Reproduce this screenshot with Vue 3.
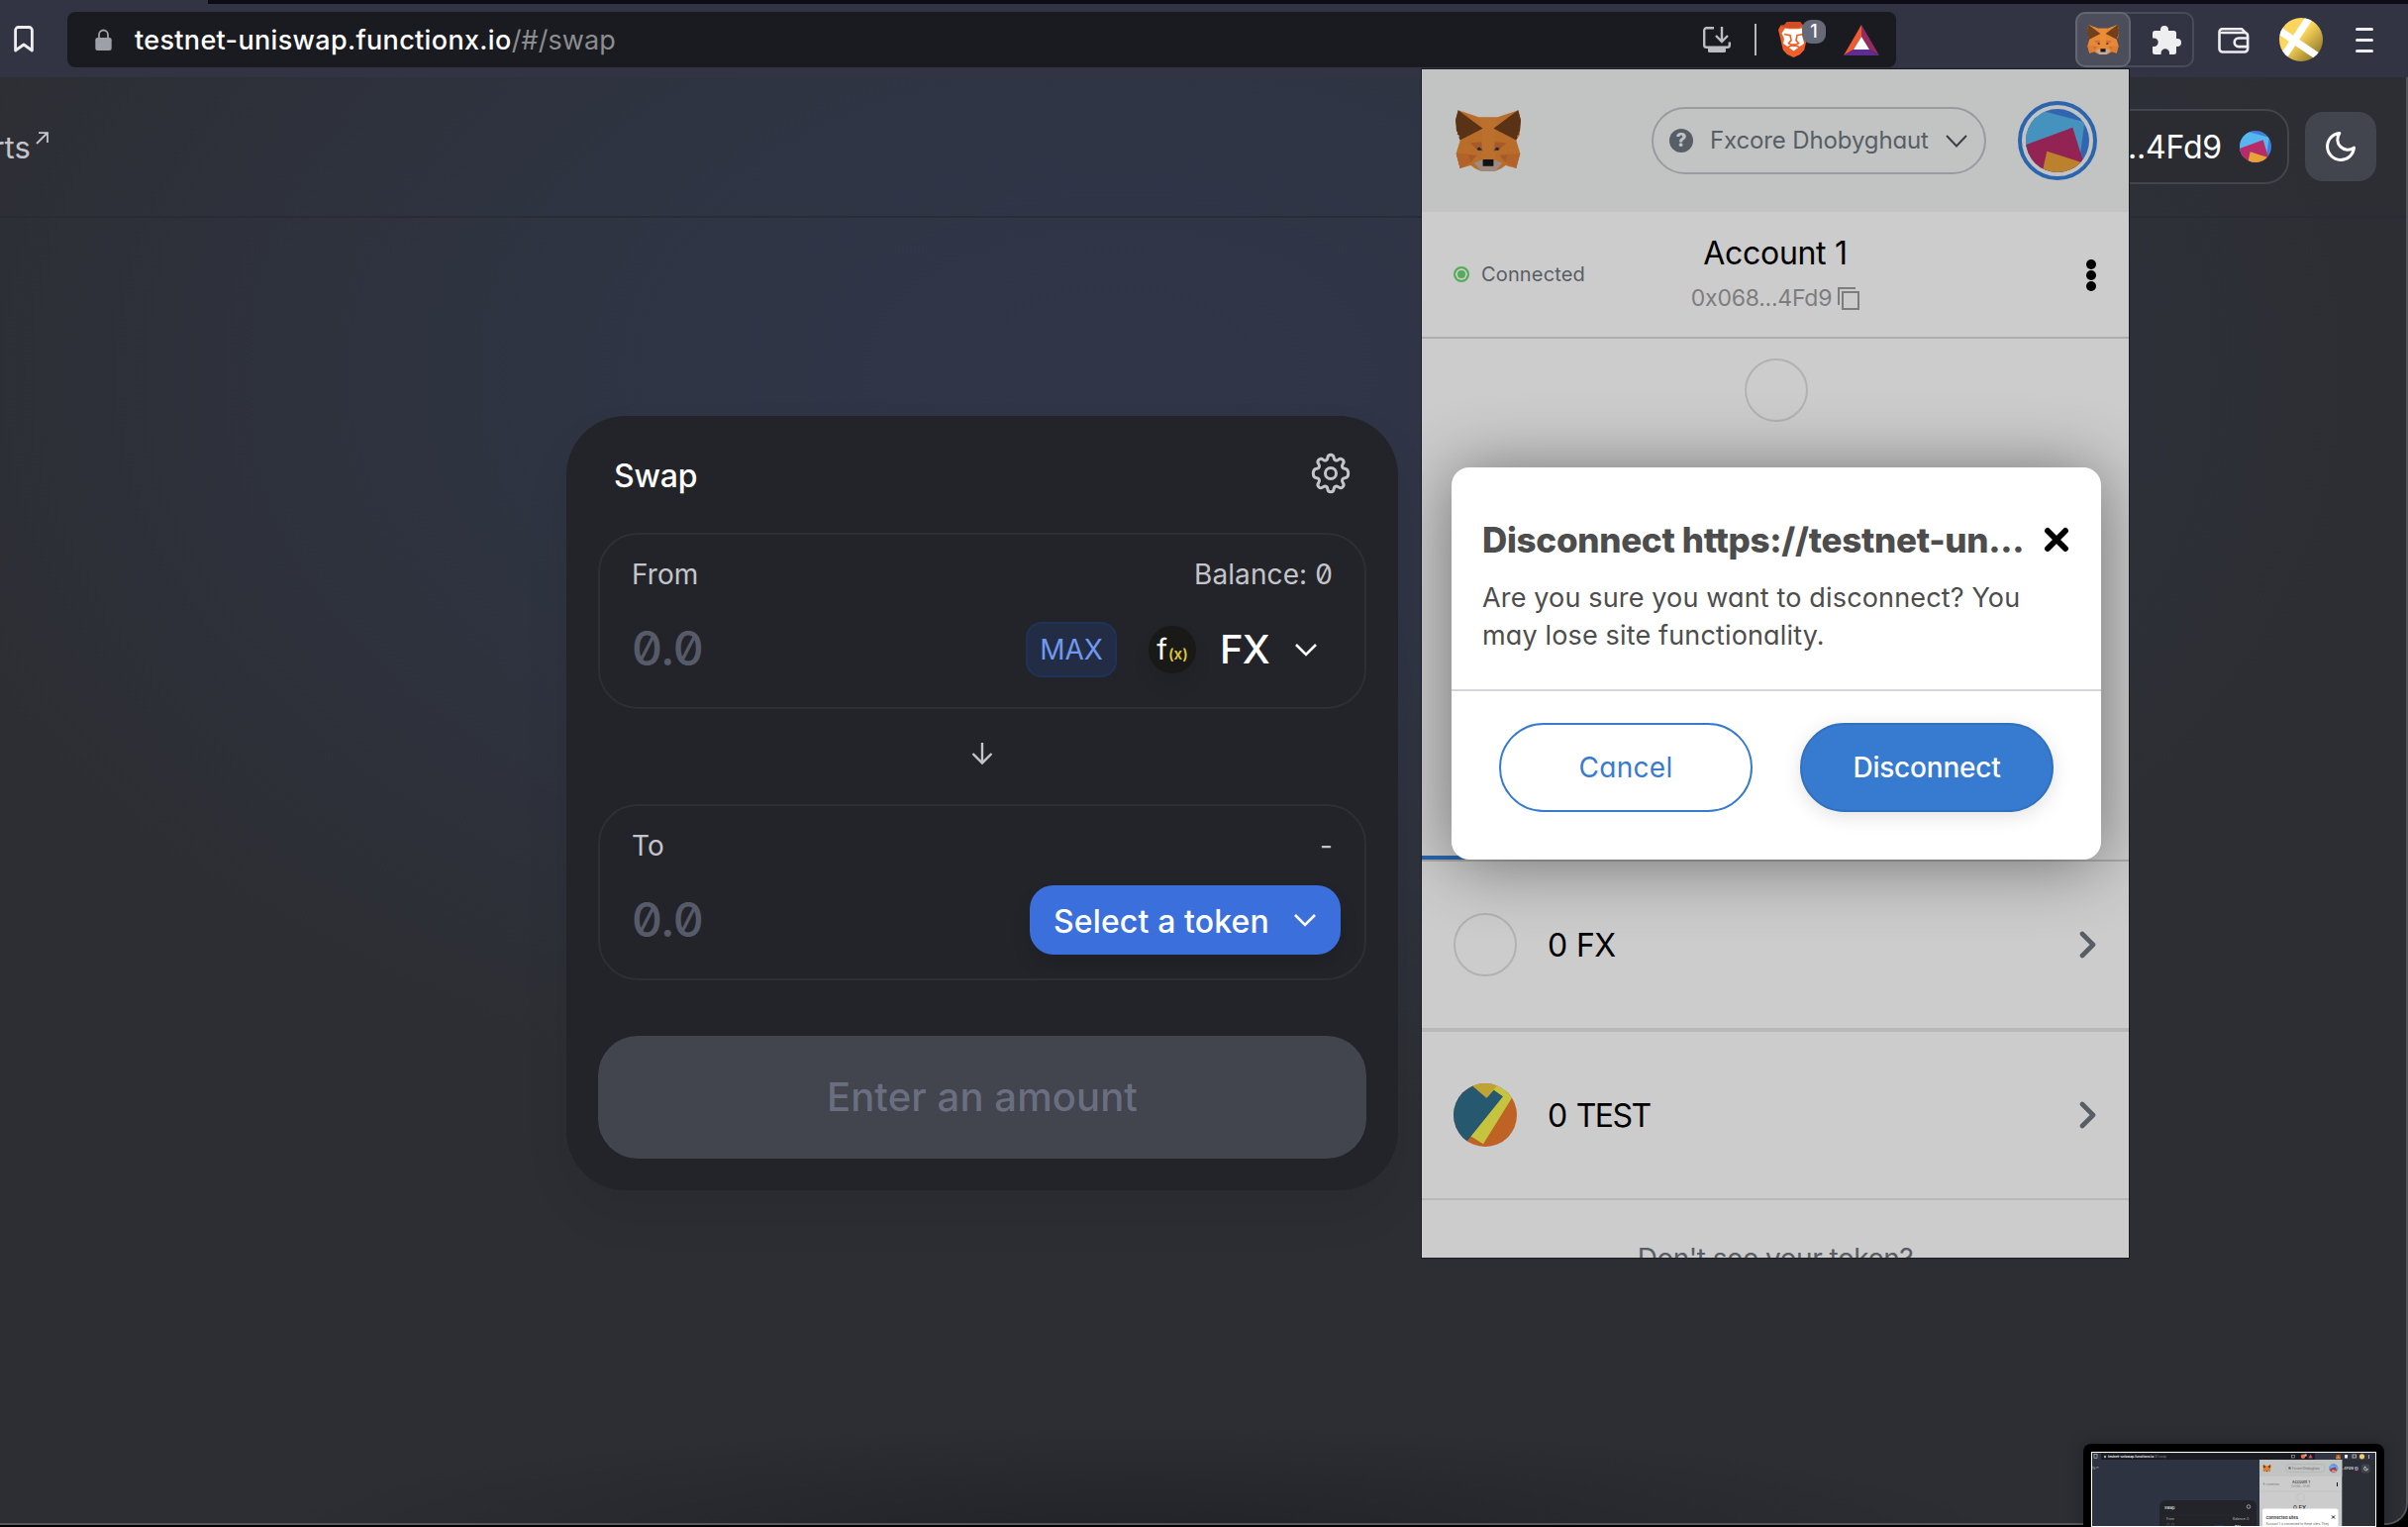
<script setup>
const tokens = [
  { id: 'native', label: '0 FX', blank: true },
  { id: 'test', label: '0 TEST', blank: false },
]
</script>

<template>
  <div class="screen">
    <svg class="defs" width="0" height="0" aria-hidden="true">
      <symbol id="fox" viewBox="0 0 196 183">
        <path fill="#e68835" d="M8 0 72 22h52L188 0l8 30-4 45-10 15 12 40-12 45-32-9-12 9-18 8H76l-18-8-12-9-32 9L2 130l12-40L0 30z" />
        <path fill="#ea8c38" d="M72 22h52l-8 60 4 62H76l4-62z" />
        <path fill="#70401d" d="M8 0 82 55 14 90l-4-8 2-5-7-5 2-5-4-4L0 30zM188 0l-74 55 68 35 4-8-2-5 7-5-2-5 4-4 3-33z" />
        <path fill="#cd6d33" d="M44 98l34-2 4 28-18-6zM152 98l-34-2-4 28 18-6zM38 133l26 2-18 22zM158 133l-26 2 18 22zM2 130l36 3 8 24-32 18z" opacity=".85" />
        <path fill="#e07c33" d="M2 130l36 3 8 24-32 18zM194 130l-36 3-8 24 32 18z" />
        <path fill="#c5ada0" d="M56 158l26-10h32l26 10-20 25H76z" />
        <path fill="#161616" d="M82 148h32v20H82z" />
        <path fill="#233447" d="M64 115l8-4 8 9-12 1zM132 115l-8-4-8 9 12 1z" />
      </symbol>
      <symbol id="jazz" viewBox="0 0 96 96">
        <clipPath id="jc"><circle cx="48" cy="48" r="48" /></clipPath>
        <g clip-path="url(#jc)">
          <path fill="#3f7edb" d="M0 0h96v96H0z" />
          <path fill="#58b6ee" d="M0 0h14l75 20-8 60H0z" />
          <path fill="#b72c68" d="M-2 55 71 28l17 55-20 20H-2z" />
          <path fill="#eaa137" d="M32 64l56 18-10 18H24z" />
        </g>
      </symbol>
      <symbol id="chev" viewBox="0 0 24 14">
        <path d="M2 2l10 10L22 2" fill="none" stroke="currentColor" stroke-width="2.6" />
      </symbol>
    </svg>

    <div class="toolbar">
      <div class="tabstrip"></div>
      <svg class="bookmark" width="20" height="28" viewBox="0 0 20 28"><path d="M1.6 4.5A3 3 0 0 1 4.6 1.5h10.8a3 3 0 0 1 3 3V25L10 19 1.6 25z" fill="none" stroke="#eeeef0" stroke-width="2.8" stroke-linejoin="round" /></svg>
      <div class="urlbar">
        <svg class="lock" width="17" height="22" viewBox="0 0 17 22"><rect x=".3" y="9" width="16.400" height="13" rx="2.200" fill="#9da0a6" /><path d="M4 10V6a4.500 4.500 0 0 1 9 0v4" fill="none" stroke="#9da0a6" stroke-width="1.800" /></svg>
        <span class="url">testnet-uniswap.functionx.io<span class="path">/#/swap</span></span>
        <svg class="install" width="28" height="28" viewBox="0 0 28 28" fill="none" stroke="#bcbdc0" stroke-width="2.400"><path d="M11 1.300H3.500a2.300 2.300 0 0 0-2.300 2.300v14.800a2.300 2.300 0 0 0 2.300 2.300h21a2.300 2.300 0 0 0 2.300-2.300v-3" /><path d="M19 0v14M13 9l6 6 6-6" /><path d="M5 20h18v4.500a1.500 1.500 0 0 1-1.500 1.500h-15A1.500 1.500 0 0 1 5 24.500z" fill="#bcbdc0" stroke="none" /></svg>
        <div class="sep"></div>
        <div class="brave">
          <svg width="31" height="36" viewBox="0 0 31 36"><path fill="#ee5f2a" d="M9 0h13l3 3.500h3.500L31 8l-1 4-3.800 16.500L22 33l-6.500 3L9 33l-4.200-4.500L1 12 0 8l2.500-4.500H6z" /><path fill="#d34c23" d="M9 0h13l3 4-4 2H10L2 5l4-2z" /><path fill="#fff" d="M7 6.500l4 .8h9l4-.8 3.500 5-2.500 5.500 1 5-5 3.500-5.500 4-5.500-4L5 22l1-5-2.500-5.500z" /><path fill="none" stroke="#ee5f2a" stroke-width="1.700" d="M6 12.500l6 1.200 1 5-2.500 3 5 2.500 5-2.500-2.500-3 1-5 6-1.200M9 26l6.500-3 6.500 3" /></svg>
          <span class="count">1</span>
        </div>
        <svg class="bat" width="36" height="31" viewBox="0 0 36 31"><path fill="#ee5a32" d="M18 0v12L10 25 0 31z" /><path fill="#942b60" d="M18 0l18 31-10-6-8-13z" /><path fill="#5f2d91" d="M0 31l10-6h16l10 6z" /><path fill="#fff" d="M18 12l8 13H10z" /></svg>
      </div>
      <div class="exts">
        <div class="ext-fox"><svg width="32" height="30"><use href="#fox" /></svg></div>
        <svg class="puzzle" width="29" height="29" viewBox="0 0 29 29"><path fill="#eeeef0" d="M2.500 5H8V4a4 4 0 0 1 8 0v1h5.500A2.500 2.500 0 0 1 24 7.500V13h1a4 4 0 0 1 0 8h-1v5.500a2.500 2.500 0 0 1-2.500 2.500H17v-1.500a4.200 4.200 0 0 0-8.400 0V29H2.500A2.500 2.500 0 0 1 0 26.500V21h1.500a4.200 4.200 0 0 0 0-8.400H0V7.500A2.500 2.500 0 0 1 2.500 5z" /></svg>
      </div>
      <svg class="wallet" width="32" height="26" viewBox="0 0 32 26" fill="none" stroke="#eeeef0" stroke-width="2.600" stroke-linecap="round" stroke-linejoin="round"><path d="M1.500 4.200v17A3.300 3.300 0 0 0 4.800 24.500h22a3.300 3.300 0 0 0 3.300-3.300V8.300A3.300 3.300 0 0 0 27 5H4M1.500 4.200a3 3 0 0 1 3-3H24l4 4" /><path d="M30 10.500h-9a4.300 4.300 0 0 0 0 8.600h9" /></svg>
      <svg class="profile" width="44" height="44" viewBox="0 0 44 44"><defs><clipPath id="pc"><circle cx="22" cy="22" r="22" /></clipPath><linearGradient id="pg" x1="0" y1="0" x2="1" y2="1"><stop offset=".45" stop-color="#fcd65c" /><stop offset=".9" stop-color="#8c7526" /></linearGradient></defs><g clip-path="url(#pc)"><path fill="url(#pg)" d="M0 0h44v44H0z" /><path stroke="#fff" stroke-width="7.500" d="M31-1 3 41M-1 12l40 27" /></g></svg>
      <div class="menu"><i></i><i></i><i></i></div>
    </div>

    <div class="page">
      <header class="nav">
        <span class="charts">Charts</span>
        <svg class="ext-arrow" width="13" height="13" viewBox="0 0 13 13"><path d="M1 12 11.500 1.500M3 1.200h9V11" fill="none" stroke="#c3c5cb" stroke-width="1.800" /></svg>
        <div class="acct"><span>0x0680...4Fd9</span><svg width="32" height="32"><use href="#jazz" /></svg></div>
        <div class="moon"><svg width="36" height="36" viewBox="0 0 24 24"><path d="M21 12.790A9 9 0 1 1 11.210 3 7 7 0 0 0 21 12.790z" fill="none" stroke="#fff" stroke-width="2" stroke-linejoin="round" stroke-linecap="round" /></svg></div>
      </header>

      <main class="card">
        <div class="card-head">
          <span>Swap</span>
          <svg width="42" height="42" viewBox="0 0 42 42" fill="none" stroke="#c3c5cb" stroke-width="3"><circle cx="21" cy="21" r="5.500" /><path stroke-linejoin="round" d="M21 2.300c1.700 0 3 1.300 3.200 3.200.2 2.200 2.600 3.200 4.300 1.800 1.500-1.200 3.400-1.200 4.600 0s1.200 3.100 0 4.600c-1.400 1.700-.4 4.100 1.800 4.300 2.500.2 3.800 1.900 3.800 4.800 0 2.900-1.300 4.600-3.800 4.800-2.200.2-3.200 2.600-1.800 4.300 1.200 1.500 1.200 3.400 0 4.600s-3.100 1.200-4.600 0c-1.700-1.400-4.100-.4-4.300 1.800-.2 1.900-1.500 3.200-3.200 3.200s-3-1.300-3.200-3.200c-.2-2.200-2.600-3.200-4.300-1.800-1.500 1.200-3.400 1.200-4.600 0s-1.200-3.100 0-4.600c1.400-1.700.4-4.100-1.800-4.300-2.500-.2-3.800-1.900-3.800-4.800 0-2.900 1.300-4.600 3.800-4.800 2.200-.2 3.200-2.600 1.800-4.300-1.200-1.500-1.200-3.400 0-4.600s3.100-1.200 4.600 0c1.700 1.400 4.100.4 4.300-1.800.2-1.900 1.500-3.200 3.200-3.200z" /></svg>
        </div>
        <section class="box">
          <div class="labels"><span>From</span><span>Balance: 0</span></div>
          <div class="entry">
            <span class="zero">0.0</span>
            <span class="max">MAX</span>
            <span class="fx-logo">f<small>(x)</small></span>
            <span class="symbol">FX</span>
            <svg class="cv" width="24" height="14"><use href="#chev" /></svg>
          </div>
        </section>
        <div class="down"><svg width="22" height="24" viewBox="0 0 22 24"><path d="M11 1v20M1.500 12 11 21.500 20.500 12" fill="none" stroke="#c3c5cb" stroke-width="2.400" /></svg></div>
        <section class="box">
          <div class="labels"><span>To</span><span>-</span></div>
          <div class="entry">
            <span class="zero">0.0</span>
            <span class="select">Select a token<svg width="24" height="14"><use href="#chev" /></svg></span>
          </div>
        </section>
        <div class="enter">Enter an amount</div>
      </main>
    </div>

    <aside class="popup">
      <div class="p-head">
        <svg class="dim" width="66" height="62"><use href="#fox" /></svg>
        <div class="network">
          <span class="q">?</span><span class="net-name">Fxcore Dhobyghaut</span>
          <svg width="22" height="13" viewBox="0 0 22 13"><path d="M1 1l10 10.500L21 1" fill="none" stroke="#3c4045" stroke-width="2" /></svg>
        </div>
        <div class="ring"><svg class="dim" width="64" height="64"><use href="#jazz" /></svg></div>
      </div>
      <div class="p-account">
        <div class="conn"><span class="dot"></span>Connected</div>
        <div class="who">
          <div class="name">Account 1</div>
          <div class="addr">0x068...4Fd9<svg width="22" height="23" viewBox="0 0 22 23" fill="none" stroke="#7d7d7d" stroke-width="2"><path d="M1 18V1h17M5 5h16v17H5z" /></svg></div>
        </div>
        <div class="kebab"><i></i><i></i><i></i></div>
      </div>
      <div class="p-main"><div class="blank"></div></div>
      <div v-for="t in tokens" :key="t.id" class="token" :class="t.id">
        <div v-if="t.blank" class="blank"></div>
        <svg v-else width="64" height="64" viewBox="0 0 96 96"><clipPath id="tc"><circle cx="48" cy="48" r="48" /></clipPath><g clip-path="url(#tc)"><path fill="#be6226" d="M0 0h96v96H0z" /><path fill="#c6c43f" d="M60 0h44L91 18 45 92 26 80z" /><path fill="#26586f" d="M0 0h26l24 22 11-12 14 10L20 88-10 110z" /><path fill="#bfa435" d="M24 0h45L50 22z" /></g></svg>
        <span class="t-label">{{ t.label }}</span>
        <svg class="t-arrow" width="18" height="28" viewBox="0 0 18 28"><path d="M3 3l11 11L3 25" fill="none" stroke="#575e65" stroke-width="4.600" stroke-linecap="round" stroke-linejoin="round" /></svg>
      </div>
      <div class="missing">Don't see your token?</div>

      <div class="modal">
        <div class="m-body">
          <div class="m-title"><b>Disconnect https://testnet-un...</b><svg width="26" height="26" viewBox="0 0 26 26"><path d="M4 4l18 18M22 4 4 22" stroke="#000" stroke-width="6" stroke-linecap="round" /></svg></div>
          <p>Are you sure you want to disconnect? You<br />may lose site functionality.</p>
        </div>
        <div class="m-actions"><span class="btn">Cancel</span><span class="btn solid">Disconnect</span></div>
      </div>
    </aside>

    <div class="thumb">
      <svg width="288" height="76" viewBox="0 0 288 76" font-family="Inter, sans-serif">
        <rect width="288" height="76" fill="#2e3342" />
        <rect x="245" width="43" height="76" fill="#2d2f36" />
        <rect width="288" height="8" fill="#313442" />
        <rect x="10" y="1.500" width="216" height="6.500" fill="#1a1b20" />
        <rect x="3" y="2.500" width="3" height="4" fill="none" stroke="#ccc" stroke-width=".6" />
        <circle cx="14" cy="5" r="1.200" fill="#aaa" />
        <text x="17" y="6.300" font-size="3.300" font-weight="600" fill="#fff">testnet-uniswap.functionx.io<tspan fill="#888" font-weight="400">/#/swap</tspan></text>
        <rect x="202.500" y="3.500" width="3" height="2.500" fill="none" stroke="#aaa" stroke-width=".6" />
        <circle cx="214" cy="4.800" r="2.200" fill="#ee7252" /><circle cx="216.500" cy="3.500" r="1.300" fill="#bbb" />
        <path d="M221.500 2.500l2.300 4h-4.600z" fill="#cf4668" />
        <use href="#fox" x="247" y="3" width="5" height="4.500" />
        <path d="M256 3h3v3.500h-3z" fill="#eee" /><rect x="264" y="3" width="3.500" height="3" fill="none" stroke="#ddd" stroke-width=".7" />
        <circle cx="273.500" cy="4.800" r="2.600" fill="#f0cf62" /><path d="M280.500 3v4" stroke="#ccc" stroke-width=".8" />
        <text x="1" y="18" font-size="4" fill="#aaa">ts↗</text>
        <text x="253" y="18" font-size="4" fill="#fff">..4Fd9</text>
        <use href="#jazz" x="266" y="15" width="4" height="4" />
        <rect x="273" y="12.500" width="8.500" height="9" rx="2" fill="#42444e" /><path d="M277 15a2 2 0 1 0 2.500 2.500 2 2 0 0 1-2.500-2.500" fill="none" stroke="#fff" stroke-width=".6" />
        <rect x="69" y="49" width="98" height="40" rx="6" fill="#232429" />
        <text x="74" y="58" font-size="4" fill="#fff">Swap</text>
        <circle cx="159" cy="55.500" r="1.800" fill="none" stroke="#bbb" stroke-width=".8" />
        <rect x="73" y="64" width="90" height="20" rx="4" fill="none" stroke="#303238" stroke-width=".4" />
        <text x="76" y="69.300" font-size="3.300" fill="#bbb">From</text><text x="143" y="69.300" font-size="3.300" fill="#bbb">Balance: 0</text>
        <text x="76" y="77" font-size="5.500" fill="#555968">0.0</text><rect x="124" y="74" width="10" height="4" fill="#24345c" /><text x="145" y="78" font-size="4.500" fill="#fff">FX</text>
        <rect x="170" y="8" width="83.300" height="68" fill="#ccc" /><rect x="170" y="8" width="83.300" height="17" fill="#c2c4c4" />
        <use href="#fox" x="173.500" y="13" width="8" height="7.500" />
        <rect x="196.500" y="12.500" width="39.500" height="8" rx="4" fill="none" stroke="#aaa" stroke-width=".5" /><circle cx="200.500" cy="16.500" r="1.300" fill="#666" />
        <text x="203" y="17.800" font-size="3" fill="#666">Fxcore Dhobyghaut</text>
        <circle cx="244.800" cy="16.700" r="4.300" fill="none" stroke="#5c93cf" stroke-width=".8" /><use href="#jazz" x="241" y="13" width="7.600" height="7.600" />
        <circle cx="174.500" cy="32.500" r=".9" fill="#5ab85a" /><text x="176.500" y="33.500" font-size="2.600" fill="#777">Connected</text>
        <text x="203" y="31.500" font-size="3.900" fill="#111">Account 1</text><text x="202" y="36.300" font-size="3" fill="#888">0x068...4Fd9</text>
        <path d="M248.500 31v4" stroke="#111" stroke-width="1" /><path d="M170 40h83" stroke="#b5b5b5" stroke-width=".4" />
        <circle cx="211.500" cy="46" r="3.800" fill="none" stroke="#b5b5b5" stroke-width=".4" />
        <text x="204" y="59" font-size="6" fill="#111">0 FX</text>
        <rect x="173" y="57.500" width="76.500" height="30" rx="2" fill="#fff" />
        <text x="176.500" y="68" font-size="4.100" font-weight="700" fill="#444">Connected sites</text><path d="M243 64.500l3 3M246 64.500l-3 3" stroke="#000" stroke-width=".9" />
        <text x="176.500" y="74" font-size="3.100" fill="#555">Account 1 is connected to these sites. They</text>
      </svg>
    </div>
  </div>
</template>

<style>
body { background: #000; overflow: hidden; }
</style>

<style scoped>
.screen { position: relative; width: 2432px; height: 1542px; overflow: hidden; background: #000; font-family: Inter, sans-serif; display: flex; flex-direction: column; box-sizing: border-box; }
.screen * { box-sizing: border-box; }
.defs { position: absolute; }
svg { display: block; flex: none; }
span { white-space: nowrap; }

.toolbar { position: relative; height: 78px; flex: none; background: #323443; display: flex; align-items: center; padding-top: 2px; }
.tabstrip { position: absolute; left: 210px; right: 0; top: 0; height: 4px; background: #0c0c16; }
.bookmark { margin-left: 14px; }
.urlbar { margin-left: 34px; width: 1847px; height: 56px; border-radius: 8px; background: #1a1b20; display: flex; align-items: center; }
.lock { margin-left: 28px; }
.url { margin-left: 23px; width: 1584px; font-size: 27px; font-weight: 500; letter-spacing: .33px; color: #fff; }
.path { color: #8c8d8f; font-weight: 400; letter-spacing: .1px; }
.install { margin-top: 2px; }
.sep { width: 2px; height: 32px; background: #b7b8bb; margin-left: 24px; }
.brave { position: relative; margin-left: 22px; width: 31px; }
.count { position: absolute; left: 24px; top: -2px; width: 24px; height: 24px; border-radius: 9px; background: #666977; color: #fff; font-size: 18px; line-height: 24px; text-align: center; font-weight: 500; }
.bat { margin-left: 35px; }
.exts { width: 120px; height: 56px; margin-left: 181px; border: 2px solid #484b59; border-radius: 10px; display: flex; align-items: center; }
.ext-fox { width: 56px; height: 56px; margin-left: -2px; border-radius: 10px; border: 2px solid #636673; background: #4c4e5b; display: flex; align-items: center; justify-content: center; }
.puzzle { margin-left: 22px; }
.wallet { margin-left: 24px; margin-top: 2px; }
.profile { margin-left: 30px; }
.menu { margin-left: 33px; display: flex; flex-direction: column; gap: 8px; }
.menu i { width: 18px; height: 3px; border-radius: 2px; background: #eee; }

.page { height: 1462px; flex: none; border-right: 2px solid #53545a; border-bottom: 2px solid #58595e; border-radius: 0 0 22px 0; display: flex; flex-direction: column;
  background: radial-gradient(ellipse 900px 120px at 1150px 1480px, rgba(24,25,30,.55), rgba(24,25,30,0)), radial-gradient(ellipse 1280px 780px at 1130px 300px, #303648 0%, #2f3545 35%, #2e323d 65%, #2d2e33 100%) #2d2e33; }
.nav { height: 142px; flex: none; border-bottom: 2px solid #292c34; display: flex; align-items: center; }
.charts { margin-left: -66px; font-size: 31px; color: #c3c5cb; }
.ext-arrow { margin-left: 5px; margin-top: -18px; }
.acct { margin-left: auto; height: 76px; margin-right: 16px; padding: 0 16px; border: 2px solid #42444e; border-radius: 24px; display: flex; align-items: center; gap: 18px; color: #fff; font-size: 32px; letter-spacing: -.2px; background: #2b2c31; }
.moon { width: 72px; height: 70px; margin-right: 30px; border-radius: 18px; background: #42444e; display: flex; align-items: center; justify-content: center; }

.card { width: 840px; height: 782px; margin: 200px 0 0 572px; padding: 0 32px; border-radius: 60px; background: #232429; display: flex; flex-direction: column; box-shadow: 0 24px 48px rgba(0,0,0,.07); font-feature-settings: "zero"; }
.card-head { height: 118px; padding: 3px 15px 0 16px; display: flex; align-items: center; justify-content: space-between; color: #fff; font-size: 32px; font-weight: 500; letter-spacing: -.2px; }
.card-head svg { margin-top: -5px; }
.box { height: 178px; flex: none; border: 2px solid #2d2f34; border-radius: 40px; padding: 22px 24px 0 32px; }
.labels { height: 36px; padding-right: 8px; display: flex; justify-content: space-between; font-size: 28px; line-height: 36px; color: #c3c5cb; letter-spacing: .1px; }
.entry { height: 72px; margin-top: 22px; display: flex; align-items: center; }
.zero { font-size: 48px; color: #565a69; letter-spacing: -.6px; font-weight: 500; margin-right: auto; margin-top: -3px; }
.max { width: 92px; height: 56px; border-radius: 16px; border: 2px solid #1f3358; background: #222c44; color: #7099ee; font-size: 28px; line-height: 53px; text-align: center; margin-right: 32px; letter-spacing: -.1px; }
.fx-logo { width: 48px; height: 48px; border-radius: 50%; background: #191918; color: #fff; display: flex; align-items: baseline; justify-content: center; font-size: 29px; line-height: 47px; box-shadow: 0 12px 20px rgba(0,0,0,.08); }
.fx-logo small { font-size: 15px; color: #dfc63a; font-weight: 600; margin-left: 1px; }
.symbol { margin-left: 24px; margin-top: -2px; color: #fff; font-size: 40px; font-weight: 500; width: 51px; letter-spacing: -.8px; }
.cv { color: #fff; margin: 0 23px 0 24px; }
.down { height: 96px; flex: none; padding-top: 33px; display: flex; justify-content: center; }
.select { width: 314px; height: 70px; border-radius: 24px; background: #3b70dc; color: #fff; font-size: 32px; font-weight: 500; display: flex; align-items: center; padding: 2px 24px 0; justify-content: space-between; letter-spacing: .13px; box-shadow: 0 12px 20px rgba(0,0,0,.1); margin-top: -2px; }
.select svg { margin-top: -2px; }
.enter { margin-top: 56px; height: 124px; border-radius: 40px; background: #42444e; color: #6a6f80; font-size: 40px; line-height: 124px; text-align: center; font-weight: 500; letter-spacing: .1px; }

.popup { position: absolute; left: 1436px; top: 70px; width: 714px; height: 1200px; overflow: hidden; background: #ccc; color: #000; outline: 1px solid #1b1c22; font-feature-settings: "cv11"; display: flex; flex-direction: column; }
.dim { filter: brightness(.8); }
.p-head { height: 144px; flex: none; background: #c2c4c4; display: flex; align-items: center; padding: 0 32px 0 34px; }
.network { margin-left: 132px; width: 338px; height: 68px; border: 2px solid #989ba0; border-radius: 34px; display: flex; align-items: center; padding-left: 16px; color: #575e65; }
.q { width: 24px; height: 24px; border-radius: 50%; background: #575e65; color: #c2c4c4; font-size: 19px; font-weight: 800; line-height: 24px; text-align: center; }
.net-name { margin-left: 17px; margin-top: -1px; width: 238px; font-size: 24px; letter-spacing: -.13px; }
.ring { margin-left: 32px; width: 80px; height: 80px; border: 4px solid #2b65ad; border-radius: 50%; padding: 4px; }
.p-account { height: 126px; flex: none; display: grid; grid-template-columns: 150px 1fr 150px; padding: 0 32px; }
.conn { display: flex; align-items: center; gap: 12px; font-size: 20px; color: #575e65; letter-spacing: .15px; }
.dot { width: 16px; height: 16px; flex: none; border-radius: 50%; border: 2px solid #55ad58; background: #55ad58; box-shadow: inset 0 0 0 2px #ccc; }
.who { text-align: center; padding-top: 23px; }
.name { font-size: 32px; line-height: 38px; letter-spacing: -.3px; }
.addr { display: flex; justify-content: center; align-items: center; gap: 6px; font-size: 23px; line-height: 28px; margin-top: 12px; color: #7d7d7d; letter-spacing: -.25px; }
.kebab { display: flex; flex-direction: column; gap: 1px; justify-content: center; align-items: flex-end; padding: 2px 1px 0 0; }
.kebab i { width: 10px; height: 10px; border-radius: 50%; background: #000; }
.p-main { height: 530px; flex: none; border-top: 2px solid #adaeaf; border-bottom: 2px solid #a9a9a9; padding: 20px 0 0 2px; display: flex; justify-content: center; position: relative; }
.p-main::after { content: ""; position: absolute; left: 0; bottom: 0; width: 356px; height: 4px; background: #2b65ad; }
.blank { width: 64px; height: 64px; flex: none; border: 2px solid #b2b2b2; border-radius: 50%; }
.token { flex: none; display: flex; align-items: center; padding: 0 32px; }
.native { height: 172px; border-bottom: 4px solid #b8b8b8; }
.test { height: 170px; border-bottom: 2px solid #b8b8b8; }
.t-label { margin-left: 31px; font-size: 32px; letter-spacing: -.6px; word-spacing: 1px; }
.test .t-label { letter-spacing: -1.500px; word-spacing: 2.500px; }
.t-arrow { margin-left: auto; }
.missing { text-align: center; padding-top: 42px; font-size: 28px; line-height: 34px; color: #575e65; letter-spacing: -.5px; }

.modal { position: absolute; left: 30px; top: 402px; width: 656px; height: 396px; border-radius: 18px; background: #fff; box-shadow: 0 4px 70px rgba(0,0,0,.45); color: #4d4d4d; }
.m-body { height: 226px; border-bottom: 2px solid #d3d6da; padding: 50px 32px 0 31px; }
.m-title { height: 46px; display: flex; align-items: center; justify-content: space-between; font-size: 35px; }
.m-title b { font-weight: 800; letter-spacing: -.3px; white-space: nowrap; }
.m-body p { margin: 17px 0 0; font-size: 27px; line-height: 38px; letter-spacing: .15px; white-space: nowrap; }
.m-actions { padding: 32px 48px 0; display: flex; justify-content: space-between; }
.btn { width: 256px; height: 90px; border: 2px solid #367bd0; border-radius: 45px; color: #367bd0; font-size: 28px; line-height: 86px; text-align: center; letter-spacing: .3px; }
.btn.solid { background: #367bd0; color: #fff; border-color: #3071be; font-weight: 500; letter-spacing: -.2px; box-shadow: 0 4px 20px rgba(0,0,0,.12); }

.thumb { position: absolute; left: 2104px; top: 1458px; width: 304px; height: 100px; background: #000; border-radius: 8px; padding: 8px; box-shadow: 0 0 16px rgba(0,0,0,.25); }
.thumb svg { outline: 1px solid #fff; outline-offset: -1px; }
</style>
